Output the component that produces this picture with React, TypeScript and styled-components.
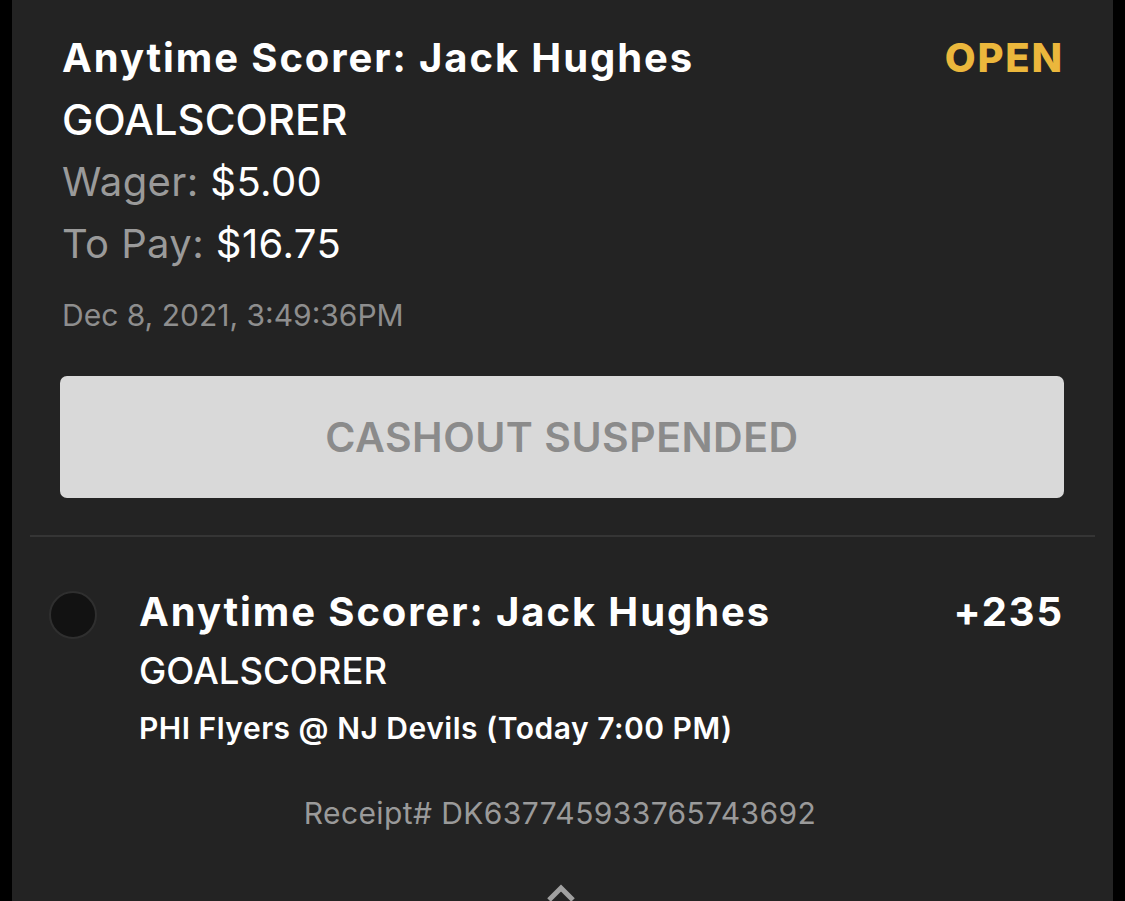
import React from "react";
import styled, { createGlobalStyle } from "styled-components";

const Global = createGlobalStyle`
  html, body {
    margin: 0;
    padding: 0;
    background: #000;
  }
  body {
    font-family: Inter, "Liberation Sans", Arial, sans-serif;
    -webkit-font-smoothing: antialiased;
  }
`;

const Card = styled.div`
  margin: 0 12px;
  height: 901px;
  background: #232323;
  overflow: hidden;
`;

const TopSection = styled.section`
  padding: 27px 49px 0 50px;
`;

const HeadRow = styled.div`
  display: flex;
  justify-content: space-between;
  align-items: baseline;
`;

const Title = styled.div`
  color: #fff;
  font-size: 40px;
  font-weight: 700;
  letter-spacing: 1.9px;
  line-height: 62px;
  white-space: nowrap;
`;

const Status = styled.div`
  color: #ebb73c;
  font-size: 40px;
  font-weight: 800;
  letter-spacing: 1.8px;
  line-height: 62px;
`;

const Market = styled.div<{ small?: boolean }>`
  color: #fff;
  font-size: ${p => (p.small ? "36.5px" : "42px")};
  font-weight: 500;
  line-height: ${p => (p.small ? "57px" : "62px")};
`;

const AmountLine = styled.div`
  font-size: 40px;
  line-height: 62px;
  letter-spacing: 0.4px;
  color: #9a9a9a;
  font-weight: 400;

  b {
    color: #fff;
    font-weight: 400;
  }
`;

const Stamp = styled.div`
  color: #8e8e8e;
  font-size: 30px;
  line-height: 40px;
  margin-top: 20px;
`;

const CashoutButton = styled.div`
  margin: 41px 0 0 -2px;
  height: 122px;
  background: #d9d9d9;
  border-radius: 7px;
  display: flex;
  align-items: center;
  justify-content: center;
  color: #8b8b8b;
  font-size: 41px;
  font-weight: 600;
  letter-spacing: 0.5px;
`;

const Divider = styled.hr`
  margin: 37px 18px 0 18px;
  border: none;
  height: 2px;
  background: #353535;
`;

const Leg = styled.div`
  display: grid;
  grid-template-columns: 90px 1fr auto;
  padding: 44px 49px 0 37px;
`;

const Radio = styled.div`
  width: 48px;
  height: 48px;
  border-radius: 50%;
  background: #121212;
  border: 2px solid #2f2f2f;
  box-sizing: border-box;
  margin-top: 10px;
`;

const LegInfo = styled.div`
  display: flex;
  flex-direction: column;
`;

const Odds = styled.div`
  color: #fff;
  font-size: 40px;
  font-weight: 700;
  letter-spacing: 1.9px;
  line-height: 62px;
`;

const Matchup = styled.div`
  color: #fff;
  font-size: 30px;
  font-weight: 600;
  letter-spacing: 0.5px;
  line-height: 56px;
`;

const Receipt = styled.div`
  text-align: center;
  color: #9a9a9a;
  font-size: 30px;
  letter-spacing: 0.4px;
  margin-top: 39px;
  padding-right: 5px;
`;

const Chevron = styled.div`
  display: flex;
  justify-content: center;
  margin-top: 52px;
  padding-right: 3px;
`;

export default function App() {
  return (
    <>
      <Global />
      <Card>
        <TopSection>
          <HeadRow>
            <Title>Anytime Scorer: Jack Hughes</Title>
            <Status>OPEN</Status>
          </HeadRow>
          <Market>GOALSCORER</Market>
          <AmountLine>
            Wager: <b>$5.00</b>
          </AmountLine>
          <AmountLine>
            To Pay: <b>$16.75</b>
          </AmountLine>
          <Stamp>Dec 8, 2021, 3:49:36PM</Stamp>
          <CashoutButton>CASHOUT SUSPENDED</CashoutButton>
        </TopSection>
        <Divider />
        <Leg>
          <Radio />
          <LegInfo>
            <Title>Anytime Scorer: Jack Hughes</Title>
            <Market small>GOALSCORER</Market>
            <Matchup>PHI Flyers @ NJ Devils (Today 7:00 PM)</Matchup>
          </LegInfo>
          <Odds>+235</Odds>
        </Leg>
        <Receipt>Receipt# DK637745933765743692</Receipt>
        <Chevron>
          <svg width="30" height="20" viewBox="0 0 30 20">
            <path d="M3 17 L15 5 L27 17" fill="none" stroke="#a0a0a0" strokeWidth="5" />
          </svg>
        </Chevron>
      </Card>
    </>
  );
}
